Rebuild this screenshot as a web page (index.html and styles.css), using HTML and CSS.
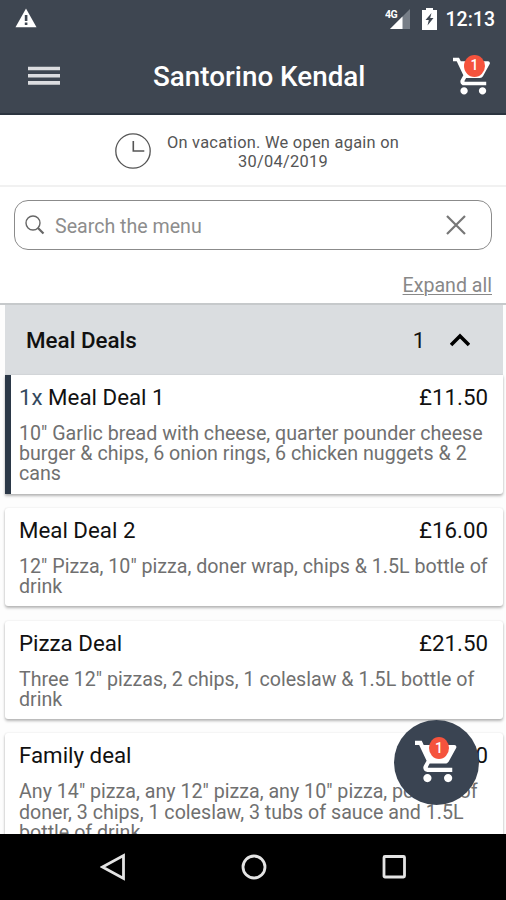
FILE: index.html
```html
<!DOCTYPE html>
<html lang="en">
<head>
<meta charset="utf-8">
<title>Santorino Kendal</title>
<link rel="stylesheet" href="styles.css">
</head>
<body>
<div class="phone">
  <header class="top">
    <div class="status">
      <svg class="warn" width="22" height="20" viewBox="0 0 22 20"><path d="M11 0.5 21.5 19.3H.5Z" fill="#fff"/><path d="M9.8 7h2.6v6H9.8zM9.8 14.5h2.6V17H9.8z" fill="#3e4651"/></svg>
      <div class="status-right">
        <svg class="signal" width="26" height="22" viewBox="0 0 26 22"><path d="M25 1v20H5Z" fill="#777e87"/><path d="M17.500 8.500V21H5Z" fill="#fff"/><text x="0" y="9.500" class="net">4G</text></svg>
        <svg class="battery" width="15" height="22" viewBox="0 0 15 22"><path d="M4 0h7v2H15V22H0V2h4Z" fill="#fff"/><path d="M9.500 5 3.500 12h3.300L5.500 17.500 11.500 10H8.200Z" fill="#3e4651"/></svg>
        <span class="time">12:13</span>
      </div>
    </div>
    <div class="bar">
      <svg class="menu" width="32" height="20" viewBox="0 0 32 20"><path d="M0 2.500h32M0 9.700h32M0 16.900h32" stroke="#dcdde0" stroke-width="3.600"/></svg>
      <h1 class="title">Santorino Kendal</h1>
      <div class="cart">
        <svg width="41" height="41" viewBox="0 0 40 40"><use href="#cart-shape"/></svg>
        <span class="badge">1</span>
      </div>
    </div>
  </header>

  <section class="notice">
    <svg class="clock" width="36" height="36" viewBox="0 0 36 36" fill="none" stroke="#555"><circle cx="18" cy="18" r="17.200" stroke-width="1.300"/><path d="M18.300 8v10h11" stroke-width="1.600"/></svg>
    <p class="notice-text">On vacation. We open again on<br>30/04/2019</p>
  </section>

  <section class="tools">
    <div class="search">
      <svg class="glass" width="20" height="20" viewBox="0 0 20 20" fill="none" stroke="#666"><circle cx="8" cy="8" r="7" stroke-width="1.400"/><path d="m12.700 12.700 5.800 5.800" stroke-width="2.200"/></svg>
      <span class="placeholder">Search the menu</span>
      <svg class="clear" width="20" height="20" viewBox="0 0 20 20"><path d="m1 1 18 18M19 1 1 19" stroke="#777" stroke-width="2.200"/></svg>
    </div>
    <div class="expand-row"><a class="expand">Expand all</a></div>
  </section>

  <main class="list">
    <div class="category">
      <h2 class="category-name">Meal Deals</h2>
      <span class="count">1</span>
      <svg class="chevron" width="20" height="14" viewBox="0 0 20 14"><path d="m1 12 9-9 9 9" fill="none" stroke="#000" stroke-width="3.600"/></svg>
    </div>
    <article class="card selected">
      <div class="card-head"><h3 class="name"><span class="qty">1x</span> Meal Deal 1</h3><span class="price">£11.50</span></div>
      <p class="desc">10" Garlic bread with cheese, quarter pounder cheese<br>burger &amp; chips, 6 onion rings, 6 chicken nuggets &amp; 2<br>cans</p>
    </article>
    <article class="card">
      <div class="card-head"><h3 class="name">Meal Deal 2</h3><span class="price">£16.00</span></div>
      <p class="desc">12" Pizza, 10" pizza, doner wrap, chips &amp; 1.5L bottle of<br>drink</p>
    </article>
    <article class="card">
      <div class="card-head"><h3 class="name">Pizza Deal</h3><span class="price">£21.50</span></div>
      <p class="desc">Three 12" pizzas, 2 chips, 1 coleslaw &amp; 1.5L bottle of<br>drink</p>
    </article>
    <article class="card">
      <div class="card-head"><h3 class="name">Family deal</h3><span class="price">£30.00</span></div>
      <p class="desc">Any 14" pizza, any 12" pizza, any 10" pizza, portion of<br>doner, 3 chips, 1 coleslaw, 3 tubs of sauce and 1.5L<br>bottle of drink</p>
    </article>
  </main>

  <div class="fab">
    <div class="cart">
      <svg width="46" height="46" viewBox="0 0 40 40"><use href="#cart-shape"/></svg>
      <span class="badge">1</span>
    </div>
  </div>

  <nav class="nav">
    <svg width="26" height="28" viewBox="0 0 26 28" fill="none" stroke="#e4e4e4" stroke-width="2.800"><path d="M23.500 2.500v23L2.500 14Z"/></svg>
    <svg width="26" height="28" viewBox="0 0 26 28" fill="none" stroke="#e4e4e4" stroke-width="2.800"><circle cx="13" cy="14" r="11"/></svg>
    <svg width="26" height="28" viewBox="0 0 26 28" fill="none" stroke="#e4e4e4" stroke-width="2.800"><rect x="3" y="3.500" width="20.500" height="20.500" rx="1"/></svg>
  </nav>
</div>
<svg class="defs" width="0" height="0"><defs>
  <g id="cart-shape" transform="translate(-1.800 -2) scale(1.800)"><path fill="#fff" d="M7 18c-1.100 0-1.990.9-1.990 2S5.900 22 7 22s2-.9 2-2-.9-2-2-2zM1 2v2h2l3.600 7.590-1.350 2.450c-.16.280-.25.610-.25.960 0 1.100.9 2 2 2h12v-2H7.420c-.14 0-.25-.11-.25-.25l.03-.12.900-1.630h7.450c.75 0 1.410-.41 1.750-1.030l3.580-6.490c.08-.14.120-.31.120-.48 0-.55-.45-1-1-1H5.210l-.94-2H1zm16 16c-1.100 0-1.990.9-1.990 2s.89 2 1.990 2 2-.9 2-2-.9-2-2-2z"/></g>
</defs></svg>
</body>
</html>
```
FILE: styles.css
```css
* { box-sizing: border-box; }
body { margin: 0; font-family: Roboto, "Liberation Sans", sans-serif; background: #fff; }
h1, h2, h3, p { margin: 0; }
svg { display: block; flex: none; }
.defs { position: absolute; }
.phone { position: relative; width: 506px; height: 900px; overflow: hidden; display: flex; flex-direction: column; background: #fdfdfd; }

.top { flex: none; height: 115px; background: #3e4651; border-bottom: 2px solid #2b343f; color: #fff; }
.status { height: 38px; display: flex; justify-content: space-between; align-items: center; padding: 0 11px 0 15px; }
.warn { margin-top: -3px; }
.status-right { display: flex; align-items: center; }
.signal { margin-right: 11px; margin-top: -1px; }
.net { font-size: 10.5px; font-weight: 700; fill: #fff; letter-spacing: -0.5px; }
.battery { margin-right: 9px; margin-top: -1px; }
.time { font-size: 19.5px; font-weight: 500; line-height: 38px; padding-top: 1px; }
.bar { height: 76px; display: grid; grid-template-columns: 125px 1fr 54px; align-items: center; }
.menu { margin: -1px 0 0 28px; }
.title { font-size: 27.8px; line-height: 32px; font-weight: 500; margin: 2px 0 0 28px; white-space: nowrap; }
.cart { position: relative; }
.bar .cart { left: 1px; }
.badge { position: absolute; border-radius: 50%; background: #f5533d; color: #fff; width: 21px; height: 22px; left: 11px; top: -1px; font-size: 14px; font-weight: 500; line-height: 21px; text-align: center; }

.notice { flex: none; height: 72px; border-bottom: 2px solid #f1f1f1; background: #fff; display: flex; padding: 18px 0 0 115px; }
.notice-text { margin-left: 15px; width: 234px; text-align: center; font-size: 16.4px; letter-spacing: 0.26px; line-height: 19px; color: #555; white-space: nowrap; }

.tools { flex: none; height: 118px; background: #fff; padding: 13px 14px 0; border-bottom: 2px solid #c6c9cb; }
.search { height: 50px; border: 1.500px solid #8b8b8b; border-radius: 14px; display: flex; align-items: center; padding: 0 25px 0 10px; }
.placeholder { flex: 1; margin-left: 10px; padding-top: 2px; font-size: 19.6px; color: #8d8d8d; }
.expand-row { text-align: right; padding-top: 24px; }
.expand { font-size: 19.6px; line-height: 24px; color: #888; text-decoration: underline; text-decoration-thickness: 1px; text-underline-offset: 2px; }

.list { flex: none; height: 529px; overflow: hidden; padding: 0 3px 0 5px; }
.category { height: 70px; background: #dadde0; display: flex; align-items: center; padding: 0 33px 0 21px; }
.category-name { flex: 1; font-size: 22.4px; font-weight: 500; color: #111; }
.count { font-size: 22px; color: #111; }
.chevron { margin-left: 25px; }
.card { background: #fff; border-radius: 3px; box-shadow: 0 2px 3px rgba(0,0,0,.28), 0 0 2px rgba(0,0,0,.1); padding: 9px 15px 9px 14px; margin-bottom: 14.300px; }
.selected { border-left: 6px solid #2b3847; padding-left: 8px; border-radius: 0 0 3px 0; }
.card-head { display: flex; justify-content: space-between; }
.name, .price { font-size: 22.3px; line-height: 26px; font-weight: 400; color: #111; white-space: nowrap; }
.qty { color: #34495e; }
.desc { margin-top: 14px; font-size: 19.65px; line-height: 20.200px; color: #707070; white-space: nowrap; }

.fab { position: absolute; left: 394px; top: 720px; width: 85px; height: 85px; border-radius: 50%; background: #3a4452; padding: 19px 0 0 21px; }
.fab .badge { left: 14px; top: -2px; width: 20px; height: 22px; font-size: 14px; line-height: 22px; }

.nav { position: relative; flex: none; height: 66px; background: #000; display: flex; justify-content: space-between; align-items: center; padding: 0 99px 0 100px; }
```
